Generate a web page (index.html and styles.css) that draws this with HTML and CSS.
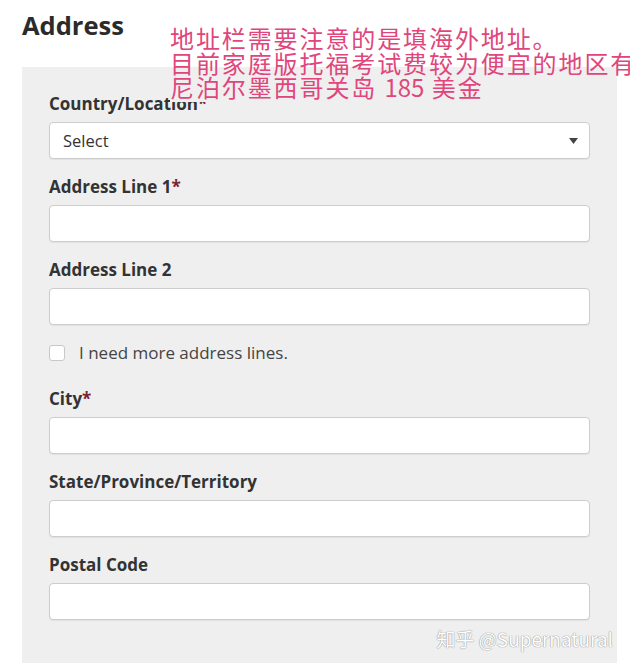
FILE: index.html
```html
<!DOCTYPE html>
<html lang="en">
<head>
<meta charset="utf-8">
<title>Address</title>
<link rel="stylesheet" href="styles.css">
</head>
<body>
<div class="page">
  <h1 class="title">Address</h1>
  <div class="note" lang="zh-CN">
    <div class="note-line">地址栏需要注意的是填海外地址。</div>
    <div class="note-line">目前家庭版托福考试费较为便宜的地区有</div>
    <div class="note-line">尼泊尔墨西哥关岛 <span class="num">185</span> 美金</div>
  </div>
  <div class="panel">
    <div class="field">
      <div class="label">Country/Location<span class="req">*</span></div>
      <div class="select">
        <span class="select-text">Select</span>
        <svg class="arrow" width="9" height="6" viewBox="0 0 9 6"><path d="M0 0H9L4.5 6Z" fill="#444"/></svg>
      </div>
    </div>
    <div class="field">
      <div class="label">Address Line 1<span class="req">*</span></div>
      <div class="input"></div>
    </div>
    <div class="field">
      <div class="label">Address Line 2</div>
      <div class="input"></div>
    </div>
    <div class="check-row">
      <span class="checkbox"></span>
      <span class="check-text">I need more address lines.</span>
    </div>
    <div class="field">
      <div class="label">City<span class="req">*</span></div>
      <div class="input"></div>
    </div>
    <div class="field">
      <div class="label">State/Province/Territory</div>
      <div class="input"></div>
    </div>
    <div class="field last">
      <div class="label">Postal Code</div>
      <div class="input"></div>
    </div>
    <div class="watermark" lang="zh-CN">知乎 @Supernatural</div>
  </div>
</div>
</body>
</html>
```

FILE: styles.css
```css
html, body {
  margin: 0;
  padding: 0;
  background: #ffffff;
}

.page {
  position: relative;
  width: 630px;
  height: 670px;
  padding: 9px 13px 0 22px;
  box-sizing: border-box;
  font-family: "Open Sans", "Liberation Sans", "Noto Sans CJK SC", sans-serif;
  color: #333333;
}

.title {
  margin: 0 0 25px 0;
  font-size: 25.5px;
  line-height: 33px;
  font-weight: 700;
  color: #2b2b2b;
}

.note {
  position: absolute;
  left: 170px;
  top: 26px;
  width: 447px;
  padding-bottom: 2px;
  font-family: "Noto Sans CJK SC", "Noto Sans", sans-serif;
  font-size: 24px;
  line-height: 24.5px;
  letter-spacing: 1.9px;
  color: #e0467c;
  background: linear-gradient(#ffffff 0, #ffffff 41px, #efefef 41px);
  white-space: nowrap;
  z-index: 2;
}

.num {
  letter-spacing: 0;
}

.panel {
  position: relative;
  width: 595px;
  height: 596px;
  box-sizing: border-box;
  background: #efefef;
  padding: 26px 27px 0 27px;
}

.field {
  margin-bottom: 17px;
}

.label {
  font-size: 17px;
  line-height: 22px;
  font-weight: 700;
  color: #333333;
  margin-bottom: 7px;
}

.req {
  color: #7b2233;
}

.input,
.select {
  height: 37px;
  box-sizing: border-box;
  background: #ffffff;
  border: 1px solid #cdcdcd;
  border-radius: 4px;
  box-shadow: 0 1px 1px rgba(0, 0, 0, 0.06);
}

.select {
  display: flex;
  align-items: center;
  justify-content: space-between;
  padding: 0 11px 0 13px;
}

.select-text {
  font-size: 16.5px;
  color: #333333;
}

.arrow {
  display: block;
  margin-top: 1px;
}

.check-row {
  display: flex;
  align-items: center;
  gap: 14px;
  margin: 2px 0 24px 0;
  height: 22px;
}

.checkbox {
  width: 16px;
  height: 16px;
  box-sizing: border-box;
  background: #ffffff;
  border: 1px solid #c8c8c8;
  border-radius: 3px;
}

.check-text {
  font-size: 17px;
  line-height: 22px;
  color: #444444;
}

.field.last {
  margin-bottom: 0;
}

.watermark {
  position: absolute;
  right: 4px;
  bottom: 13px;
  font-family: "Noto Sans CJK SC", "Noto Sans", sans-serif;
  font-size: 19px;
  line-height: 22px;
  color: #ffffff;
  text-shadow: 0 0 1px #8e8e8e, 0 0 1px #8e8e8e;
  white-space: nowrap;
}
```
